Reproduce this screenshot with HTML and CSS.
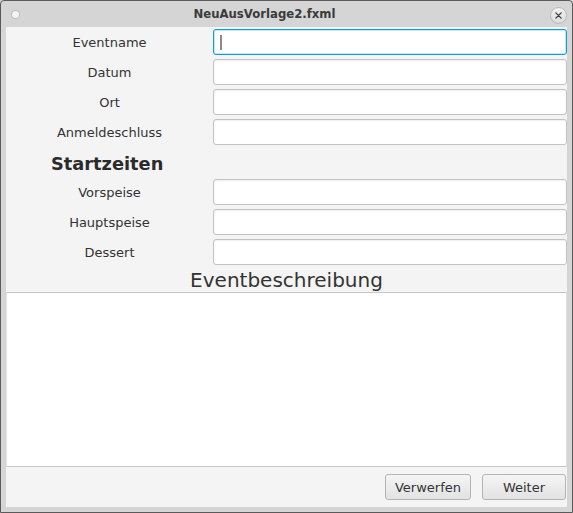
FILE: index.html
```html
<!DOCTYPE html>
<html>
<head>
<meta charset="utf-8">
<link rel="stylesheet" href="styles.css">
</head>
<body>
<div class="window">
  <div class="titlebar">
    <span class="dot"></span>
    <span class="title">NeuAusVorlage2.fxml</span>
    <span class="close"><svg width="16" height="16" viewBox="0 0 16 16"><path d="M5.2 5.2 L10.8 10.8 M10.8 5.2 L5.2 10.8" stroke="#3a3a3a" stroke-width="1.4" stroke-linecap="round"/></svg></span>
  </div>
  <div class="content">
    <div class="form">
      <div class="label">Eventname</div><div class="field focused"><span class="caret"></span></div>
      <div class="label">Datum</div><div class="field"></div>
      <div class="label">Ort</div><div class="field"></div>
      <div class="label">Anmeldeschluss</div><div class="field"></div>
      <div class="label heading">Startzeiten</div><div></div>
      <div class="label">Vorspeise</div><div class="field"></div>
      <div class="label">Hauptspeise</div><div class="field"></div>
      <div class="label">Dessert</div><div class="field"></div>
    </div>
    <div class="section">Eventbeschreibung</div>
    <div class="textarea"></div>
    <div class="buttons">
      <div class="btn btn-a">Verwerfen</div>
      <div class="btn btn-b">Weiter</div>
    </div>
  </div>
</div>
</body>
</html>
```
FILE: styles.css
```css
html, body {
  margin: 0;
  padding: 0;
  background: #d5d5d5;
}
.window {
  width: 573px;
  height: 513px;
  box-sizing: border-box;
  border: 1px solid #5a5a5a;
  border-radius: 4px 4px 0 0;
  background: #d5d5d5;
  display: flex;
  flex-direction: column;
  font-family: "DejaVu Sans", sans-serif;
}
.titlebar {
  height: 26px;
  display: flex;
  align-items: center;
  padding: 0 5px 0 11px;
}
.dot {
  width: 7px;
  height: 7px;
  border-radius: 50%;
  background: #f4f4f4;
  box-shadow: 0 0 0 1px #bdbdbd;
}
.title {
  flex: 1;
  text-align: center;
  font-weight: bold;
  font-size: 11.7px;
  color: #3b3b3b;
  padding-right: 40px;
}
.close {
  width: 15px;
  height: 15px;
  border-radius: 50%;
  border: 1px solid #b8b8b8;
  background: linear-gradient(#f2f2f2, #dcdcdc);
  display: flex;
  align-items: center;
  justify-content: center;
  margin-top: 2px;
}
.close svg { width: 15px; height: 15px; }
.content {
  margin: 0 5px 5px 5px;
  flex: 1;
  background: #f4f4f4;
  display: flex;
  flex-direction: column;
  padding-top: 2px;
}
.form {
  display: grid;
  grid-template-columns: 207px 354px;
  grid-auto-rows: 26px;
  row-gap: 4px;
}
.label {
  display: flex;
  align-items: center;
  justify-content: center;
  font-size: 13px;
  color: #333;
}
.label.heading {
  font-size: 17.8px;
  font-weight: bold;
  color: #2b2b2b;
  justify-content: flex-start;
  padding: 2px 0 0 45px;
}
.field {
  box-sizing: border-box;
  background: #fff;
  border: 1px solid #c3c3c3;
  border-radius: 3px;
  box-shadow: inset 0 1px 2px rgba(0,0,0,0.07);
  display: flex;
  align-items: center;
  padding-left: 6px;
}
.field.focused {
  border-color: #0f9dd6;
  box-shadow: inset 0 0 0 1px #c3e7f7;
}
.caret {
  width: 2px;
  height: 15px;
  background: #8a8a8a;
}
.section {
  margin-top: 4px;
  height: 23px;
  line-height: 23px;
  text-align: center;
  font-size: 20px;
  color: #333;
}
.textarea {
  height: 175px;
  box-sizing: border-box;
  background: #fff;
  border-top: 1px solid #c6c6c6;
  border-bottom: 1px solid #c6c6c6;
  border-left: 1px solid #e2e2e2;
  border-right: 1px solid #e2e2e2;
}
.buttons {
  flex: 1;
  display: flex;
  justify-content: flex-end;
  align-items: flex-start;
  padding: 7px 1px 0 0;
  gap: 11px;
}
.btn {
  box-sizing: border-box;
  height: 26px;
  border: 1px solid #b4b4b4;
  border-radius: 3px;
  background: linear-gradient(#f5f5f5, #e2e2e2);
  font-size: 13px;
  color: #333;
  display: flex;
  align-items: center;
  justify-content: center;
}
.btn-a { width: 86px; }
.btn-b { width: 84px; }
```
